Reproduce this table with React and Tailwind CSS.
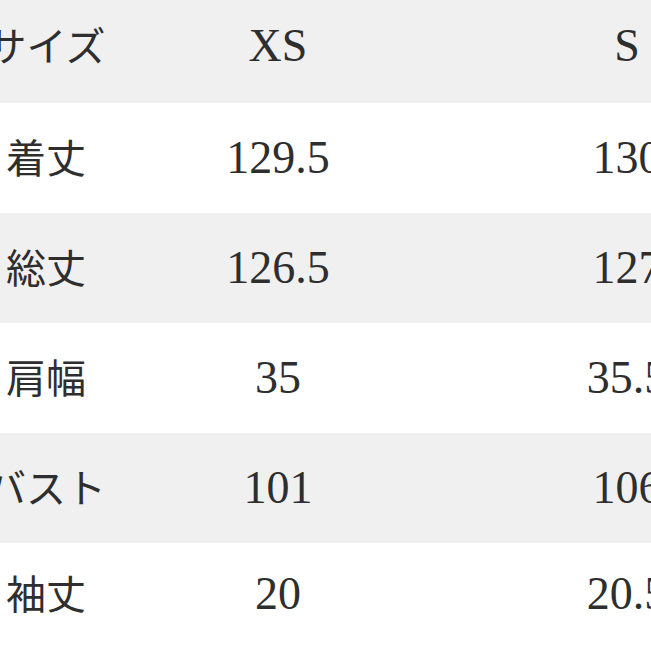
const rows = [
  { label: "着丈", xs: "129.5", s: "130" },
  { label: "総丈", xs: "126.5", s: "127" },
  { label: "肩幅", xs: "35", s: "35.5" },
  { label: "バスト", xs: "101", s: "106" },
  { label: "袖丈", xs: "20", s: "20.5" },
];

const Row = ({ label, xs, s, gray, className = "" }) => (
  <div
    className={`grid grid-cols-[92px_372px_326px] items-center ${
      gray ? "bg-[#f0f0f0]" : "bg-white"
    } ${className}`}
  >
    <div className="flex justify-center whitespace-nowrap pb-[4px] text-[40px] leading-none font-['Noto_Sans_CJK_JP',sans-serif]">
      {label}
    </div>
    <div className="text-center text-[46px] leading-none font-['Liberation_Serif',serif]">{xs}</div>
    <div className="text-center text-[46px] leading-none font-['Liberation_Serif',serif]">{s}</div>
  </div>
);

export default function App() {
  return (
    <div className="w-[651px] h-[651px] overflow-hidden bg-white text-[#2e2e2e]">
      <Row label="サイズ" xs="XS" s="S" gray className="h-[103px] pb-[12px]" />
      {rows.map((r, i) => (
        <Row
          key={r.label}
          {...r}
          gray={i % 2 === 1}
          className={i === rows.length - 1 ? "h-[108px] pb-[6px]" : "h-[110px]"}
        />
      ))}
    </div>
  );
}
